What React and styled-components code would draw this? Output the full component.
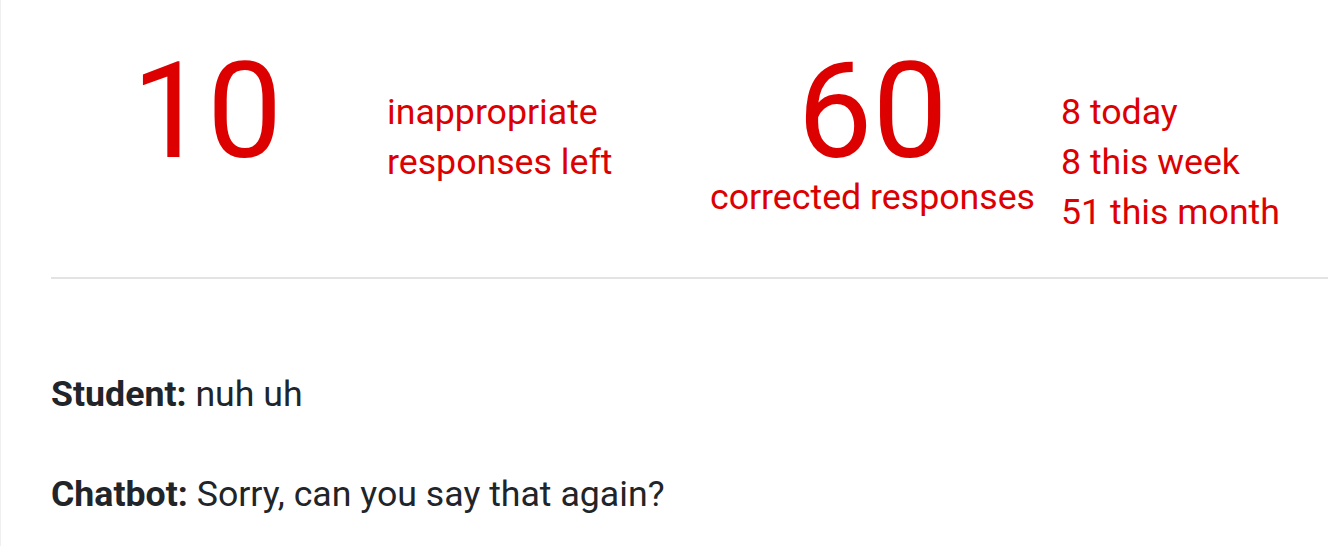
import React from "react";
import styled, { createGlobalStyle } from "styled-components";

const GlobalStyle = createGlobalStyle`
  html, body {
    margin: 0;
    padding: 0;
    background: #ffffff;
  }
  body {
    font-family: Roboto, "Liberation Sans", Arial, sans-serif;
    color: #212529;
  }
`;

const Main = styled.main`
  min-height: 546px;
  box-sizing: border-box;
  border-left: 1px solid #efefef;
  padding: 45px 0 0 50px;
`;

const StatsRow = styled.section`
  display: grid;
  grid-template-columns: 312px 297px 329px auto;
  column-gap: 24px;
  align-items: start;
  color: #dd0000;
`;

const BigStat = styled.div`
  display: flex;
  flex-direction: column;
  align-items: center;
  text-align: center;
`;

const BigNumber = styled.div`
  font-size: 134px;
  line-height: 1;
  font-weight: 400;
`;

const Caption = styled.div`
  margin-top: 1px;
  font-size: 35.7px;
  line-height: 1;
  white-space: nowrap;
`;

const TextList = styled.div`
  margin-top: 42px;
  font-size: 35.7px;
  line-height: 50px;
  white-space: nowrap;
`;

const Divider = styled.hr`
  margin: 40px 0 0 0;
  border: none;
  height: 2px;
  background: #e3e3e3;
`;

const Transcript = styled.section`
  display: flex;
  flex-direction: column;
  gap: 58px;
  padding-top: 94px;
`;

const Message = styled.p`
  margin: 0;
  font-size: 35.7px;
  line-height: 42px;
  color: #212529;
`;

const Speaker = styled.strong`
  font-weight: 700;
`;

export default function App() {
  return (
    <>
      <GlobalStyle />
      <Main>
        <StatsRow>
          <BigStat>
            <BigNumber>10</BigNumber>
          </BigStat>
          <TextList>
            <div>inappropriate</div>
            <div>responses left</div>
          </TextList>
          <BigStat>
            <BigNumber>60</BigNumber>
            <Caption>corrected responses</Caption>
          </BigStat>
          <TextList>
            <div>8 today</div>
            <div>8 this week</div>
            <div>51 this month</div>
          </TextList>
        </StatsRow>
        <Divider />
        <Transcript>
          <Message>
            <Speaker>Student:</Speaker> nuh uh
          </Message>
          <Message>
            <Speaker>Chatbot:</Speaker> Sorry, can you say that again?
          </Message>
        </Transcript>
      </Main>
    </>
  );
}
